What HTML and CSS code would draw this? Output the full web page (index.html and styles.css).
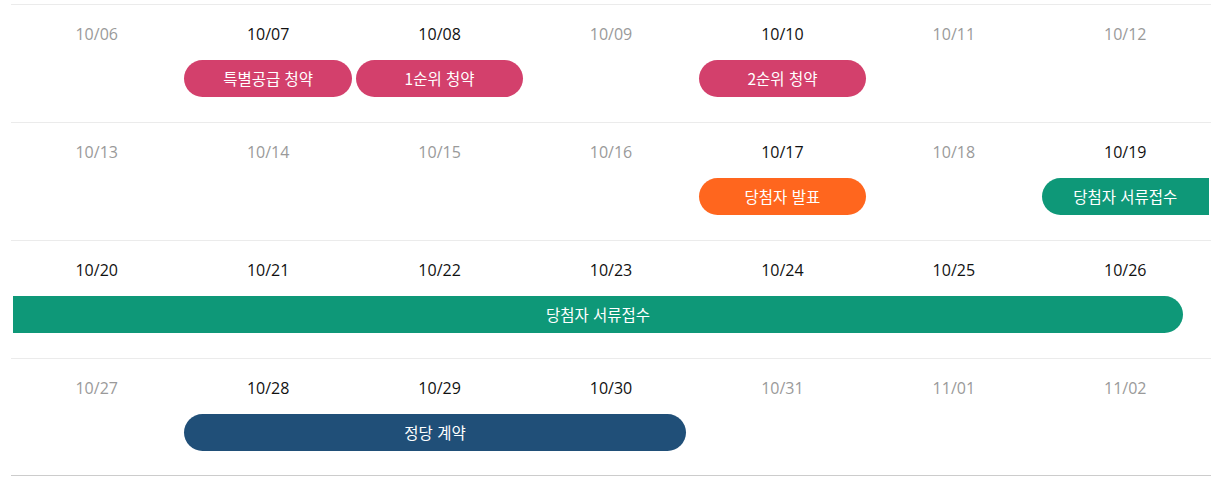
FILE: index.html
```html
<!DOCTYPE html>
<html lang="ko">
<head>
    <meta charset="UTF-8">
    <meta name="viewport" content="width=device-width, initial-scale=1.0">
    <title>청약 일정</title>
    <link rel="stylesheet" href="styles.css">
</head>
<body>
    <div class="calendar">
        <div class="week">
            <div class="day off">10/06</div>
            <div class="day">10/07</div>
            <div class="day">10/08</div>
            <div class="day off">10/09</div>
            <div class="day">10/10</div>
            <div class="day off">10/11</div>
            <div class="day off">10/12</div>
            <div class="event pink" style="grid-column: 2 / 3">특별공급 청약</div>
            <div class="event pink" style="grid-column: 3 / 4">1순위 청약</div>
            <div class="event pink" style="grid-column: 5 / 6">2순위 청약</div>
        </div>
        <div class="week">
            <div class="day off">10/13</div>
            <div class="day off">10/14</div>
            <div class="day off">10/15</div>
            <div class="day off">10/16</div>
            <div class="day">10/17</div>
            <div class="day off">10/18</div>
            <div class="day">10/19</div>
            <div class="event orange" style="grid-column: 5 / 6">당첨자 발표</div>
            <div class="event green cont-right" style="grid-column: 7 / 8">당첨자 서류접수</div>
        </div>
        <div class="week">
            <div class="day">10/20</div>
            <div class="day">10/21</div>
            <div class="day">10/22</div>
            <div class="day">10/23</div>
            <div class="day">10/24</div>
            <div class="day">10/25</div>
            <div class="day">10/26</div>
            <div class="event green cont-left full" style="grid-column: 1 / 8">당첨자 서류접수</div>
        </div>
        <div class="week last">
            <div class="day off">10/27</div>
            <div class="day">10/28</div>
            <div class="day">10/29</div>
            <div class="day">10/30</div>
            <div class="day off">10/31</div>
            <div class="day off">11/01</div>
            <div class="day off">11/02</div>
            <div class="event navy span3" style="grid-column: 2 / 5">정당 계약</div>
        </div>
    </div>
</body>
</html>
```

FILE: styles.css
```css
body, html {
    margin: 0;
    padding: 0;
    background: #fff;
}
body {
    font-family: "Open Sans", "Noto Sans CJK KR", sans-serif;
}
.calendar {
    width: 1200px;
    margin: 4px 0 0 11px;
}
.week {
    display: grid;
    grid-template-columns: repeat(7, 1fr);
    grid-template-rows: 24px 37px;
    row-gap: 14px;
    height: 118px;
    box-sizing: border-box;
    padding-top: 17px;
    border-top: 1px solid #ebebeb;
}
.week.last {
    border-bottom: 1px solid #cccccc;
}
.day {
    grid-row: 1;
    text-align: center;
    font-size: 16px;
    line-height: 24px;
    font-weight: 500;
    color: #111;
}
.day.off {
    font-weight: 400;
    color: #9a9a9a;
}
.event {
    grid-row: 2;
    margin: 0 2px;
    height: 37px;
    line-height: 37px;
    border-radius: 19px;
    text-align: center;
    color: #fff;
    font-family: "Noto Sans CJK KR", sans-serif;
    font-size: 15.5px;
}
.pink {
    background: #d3406c;
}
.orange {
    background: #ff661e;
}
.green {
    background: #0e9878;
}
.navy {
    background: #204f78;
}
.cont-right {
    border-radius: 19px 0 0 19px;
}
.cont-left {
    border-radius: 0 19px 19px 0;
}
.full {
    margin-right: 28px;
}
.span3 {
    margin-right: 11px;
}
```
